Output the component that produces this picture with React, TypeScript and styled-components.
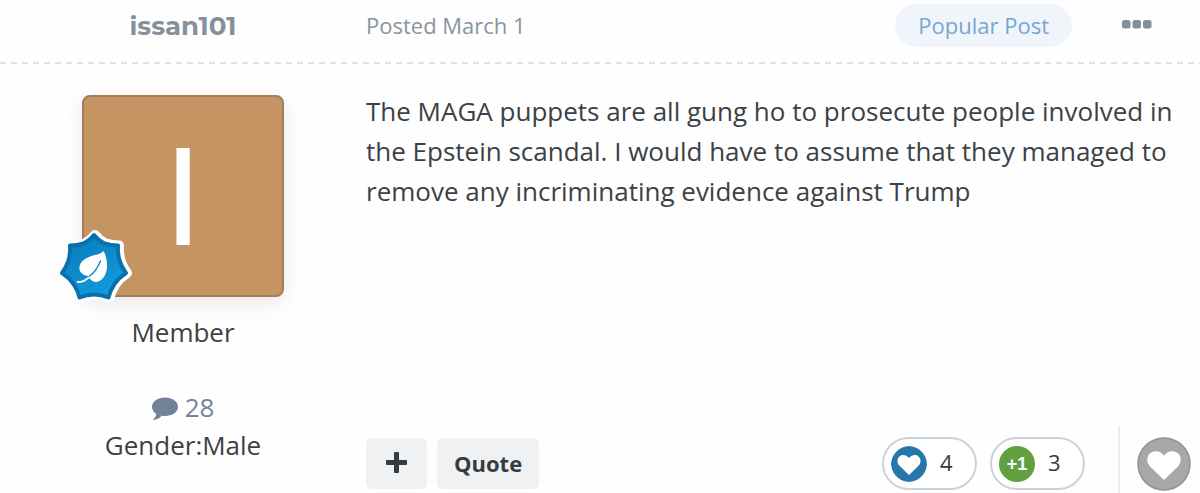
import React from "react";
import styled, { createGlobalStyle } from "styled-components";

const GlobalStyle = createGlobalStyle`
  *, *::before, *::after { box-sizing: border-box; }
  body {
    margin: 0;
    background: #fefefe;
    color: #3b4146;
    font-family: "Open Sans", "Noto Sans", sans-serif;
    font-size: 26px;
    line-height: 40px;
  }
  h3, p, ul { margin: 0; padding: 0; }
  svg { display: block; overflow: visible; }
  button { font: inherit; border: 0; padding: 0; cursor: pointer; }
  a { color: inherit; text-decoration: none; }
`;

const authorColumn = "366px";

const Post = styled.article`
  display: grid;
  grid-template-columns: ${authorColumn} minmax(0, 1fr);
`;

const Header = styled.header`
  grid-column: 1 / -1;
  display: grid;
  grid-template-columns: ${authorColumn} minmax(0, 1fr);
  align-items: center;
  padding: 4px 0 17px;
  background: repeating-linear-gradient(90deg, #dfe1e3 0 6px, transparent 6px 11px) bottom / 100% 2px no-repeat;
`;

const AuthorName = styled.h3`
  text-align: center;
  font-family: Montserrat, Inter, sans-serif;
  font-size: 26px;
  font-weight: 700;
  color: #84919c;
`;

const Meta = styled.div`
  display: flex;
  align-items: center;
  gap: 50px;
  padding-right: 48px;
  font-size: 22px;
  line-height: 43px;
`;

const PostedLink = styled.a`
  margin-right: auto;
  color: #8a949d;
`;

const PopularBadge = styled.strong`
  padding: 0 23px;
  border-radius: 22px;
  background: #f0f5fc;
  color: #78a5d3;
  font-weight: 400;
`;

const MenuButton = styled.button`
  background: none;
  color: #82909b;
`;

const Author = styled.aside`
  display: flex;
  flex-direction: column;
  align-items: center;
  padding-top: 31px;
  line-height: 38px;
`;

const Avatar = styled.a`
  position: relative;
  display: flex;
  align-items: center;
  justify-content: center;
  width: 202px;
  height: 202px;
  border: 2px solid #a27e5a;
  border-radius: 8px;
  background: #c49462;
  box-shadow: 0 6px 20px rgba(0, 0, 0, 0.09);
  color: #fff;
  font-family: "Liberation Sans", Arial, sans-serif;
  font-size: 141px;
  line-height: 134px;
`;

const RankBadge = styled.span`
  position: absolute;
  left: -26px;
  bottom: -8px;
`;

const Role = styled.p`
  margin-top: 16px;
`;

const Stats = styled.ul`
  margin-top: 37px;
  list-style: none;
  text-align: center;
`;

const PostCount = styled.a`
  display: flex;
  align-items: center;
  justify-content: center;
  gap: 7px;
  color: #73829b;
`;

const Content = styled.div`
  display: flex;
  flex-direction: column;
  justify-content: space-between;
  min-height: 429px;
`;

const Message = styled.p`
  padding: 27px 20px 0 0;
`;

const Controls = styled.footer`
  display: flex;
  align-items: stretch;
  height: 67px;
`;

const Actions = styled.div`
  display: flex;
  align-items: center;
  gap: 10px;
  margin-right: auto;
  padding-top: 8px;
`;

const ActionButton = styled.button<{ $pad: number }>`
  display: flex;
  align-items: center;
  height: 51px;
  padding: 0 ${(p) => p.$pad}px 2px;
  border-radius: 6px;
  background: #f0f1f3;
  color: #353c41;
  font-size: 22px;
  font-weight: 700;
`;

const Reactions = styled.div`
  display: flex;
  align-items: center;
  gap: 13px;
  padding: 8px 33px 0 0;
`;

const Reaction = styled.button`
  display: flex;
  align-items: center;
  gap: 13px;
  width: 95px;
  height: 53px;
  padding-left: 7px;
  border: 2px solid #cad3dc;
  border-radius: 27px;
  background: #fff;
  color: #353c41;
  font-size: 22px;
`;

const Count = styled.span`
  padding-bottom: 3px;
`;

const ReactCell = styled.div`
  display: flex;
  align-items: center;
  padding: 8px 9px 0 17px;
  border-left: 2px solid #ebedee;
`;

const ReactButton = styled.button`
  background: none;
`;

const heart =
  "M12 21.5 L2.2 12 C-0.7 9 -0.5 4.6 2.1 2.4 C5 0 9.2 0.5 12 4 C14.8 0.5 19 0 21.9 2.4 C24.5 4.6 24.7 9 21.8 12 Z";

const star =
  "M36 4 Q40 9.500 46.500 12.500 Q53 14.500 60 14.500 Q59.500 22 61.500 29.500 Q64 37 68 42 Q61 46.500 56.500 53 Q52 60 50.500 66.500 Q43 63.500 36 63.500 Q29 63.500 21.500 66.500 Q20 60 15.500 53 Q11 46.500 4 42 Q8 37 10.500 29.500 Q12.500 22 12 14.500 Q19 14.500 25.500 12.500 Q32 9.500 36 4 Z";

function LeafBadge() {
  return (
    <svg width="72" height="72" viewBox="0 0 72 72" aria-hidden="true">
      <defs>
        <linearGradient id="rank-blue" x1="0" y1="0" x2="0.6" y2="1">
          <stop offset="0" stopColor="#0879b8" />
          <stop offset="1" stopColor="#129adb" />
        </linearGradient>
      </defs>
      <path d={star} transform="translate(1 0)" fill="#fff" stroke="#fff" strokeWidth="10" strokeLinejoin="round" />
      <path d={star} fill="url(#rank-blue)" stroke="#0871ac" strokeWidth="4" strokeLinejoin="round" />
      <path
        d="M45.500 20 C42 24 36 23.500 31 26 C24 29 21 33 21.500 38 C22 42 25.500 44.500 30 45 C32 48.500 34.500 51 38.500 51 C45.500 50 49 42 49 35.500 C49 29 48 24 45.500 20 Z"
        fill="#fff"
      />
      <path d="M19.700 51 C26 51.500 30 48 34 43" fill="none" stroke="#fff" strokeWidth="2" strokeLinecap="round" />
      <path d="M31 45.500 C36.500 42 40 36 42.500 30" fill="none" stroke="#0e86c5" strokeWidth="1.400" strokeLinecap="round" />
    </svg>
  );
}

function HeartIcon({ size, fill, ring, scale }: { size: number; fill: string; ring: string; scale: number }) {
  return (
    <svg width={size} height={size} viewBox="0 0 54 54" aria-hidden="true">
      <circle cx="27" cy="27" r="26" fill={fill} stroke={ring} strokeWidth="1.500" />
      <path d={heart} fill="#fff" transform={`translate(27 29) scale(${scale}) translate(-12 -11.500)`} />
    </svg>
  );
}

const PlusOne = styled.span`
  display: flex;
  align-items: center;
  justify-content: center;
  width: 36px;
  height: 36px;
  border-radius: 50%;
  background: #62a03f;
  color: #fff;
  font-family: "Liberation Sans", Arial, sans-serif;
  font-size: 18px;
  font-weight: 700;
`;

export default function App() {
  return (
    <>
      <GlobalStyle />
      <Post>
        <Header>
          <AuthorName>
            <a href="#author">issan101</a>
          </AuthorName>
          <Meta>
            <PostedLink href="#post">Posted March 1</PostedLink>
            <PopularBadge>Popular Post</PopularBadge>
            <MenuButton type="button" aria-label="More options">
              <svg width="30" height="8" viewBox="0 0 30 8" fill="currentColor" aria-hidden="true">
                <rect x="0" y="-2" width="8.500" height="8.500" rx="2.500" />
                <rect x="10.500" y="-2" width="8.500" height="8.500" rx="2.500" />
                <rect x="21" y="-2" width="8.500" height="8.500" rx="2.500" />
              </svg>
            </MenuButton>
          </Meta>
        </Header>

        <Author>
          <Avatar href="#author" aria-label="issan101">
            I
            <RankBadge>
              <LeafBadge />
            </RankBadge>
          </Avatar>
          <Role>Member</Role>
          <Stats>
            <li>
              <PostCount href="#posts">
                <svg width="26" height="23" viewBox="0 0 26 23" fill="currentColor" aria-hidden="true">
                  <path d="M13 1.500 C20.200 1.500 26 5.500 26 10.800 C26 16.100 20.200 20.100 13 20.100 C11.800 20.100 10.700 20 9.600 19.800 C7.400 22.200 4.700 23.800 1.900 24.100 C1.300 24.100 1.200 23.500 1.600 23.100 C2.900 21.700 4 20.100 4.200 17.900 C1.600 16.200 0 13.700 0 10.800 C0 5.500 5.800 1.500 13 1.500 Z" />
                </svg>
                28
              </PostCount>
            </li>
            <li>Gender:Male</li>
          </Stats>
        </Author>

        <Content>
          <Message>
            The MAGA puppets are all gung ho to prosecute people involved in the Epstein scandal. I would have to
            assume that they managed to remove any incriminating evidence against Trump
          </Message>
          <Controls>
            <Actions>
              <ActionButton type="button" $pad={20} aria-label="Multi-quote">
                <svg width="21" height="21" viewBox="0 0 21 21" fill="currentColor" aria-hidden="true">
                  <rect x="8" y="0" width="5" height="21" rx="1" />
                  <rect x="0" y="8" width="21" height="5" rx="1" />
                </svg>
              </ActionButton>
              <ActionButton type="button" $pad={17}>
                Quote
              </ActionButton>
            </Actions>
            <Reactions>
              <Reaction type="button" aria-label="Like 4">
                <HeartIcon size={36} fill="#2477a8" ring="#2477a8" scale={1.45} />
                <Count>4</Count>
              </Reaction>
              <Reaction type="button" aria-label="+1 3">
                <PlusOne>+1</PlusOne>
                <Count>3</Count>
              </Reaction>
            </Reactions>
            <ReactCell>
              <ReactButton type="button" aria-label="Like this post">
                <HeartIcon size={54} fill="#a8a8a8" ring="#929292" scale={1.4} />
              </ReactButton>
            </ReactCell>
          </Controls>
        </Content>
      </Post>
    </>
  );
}
